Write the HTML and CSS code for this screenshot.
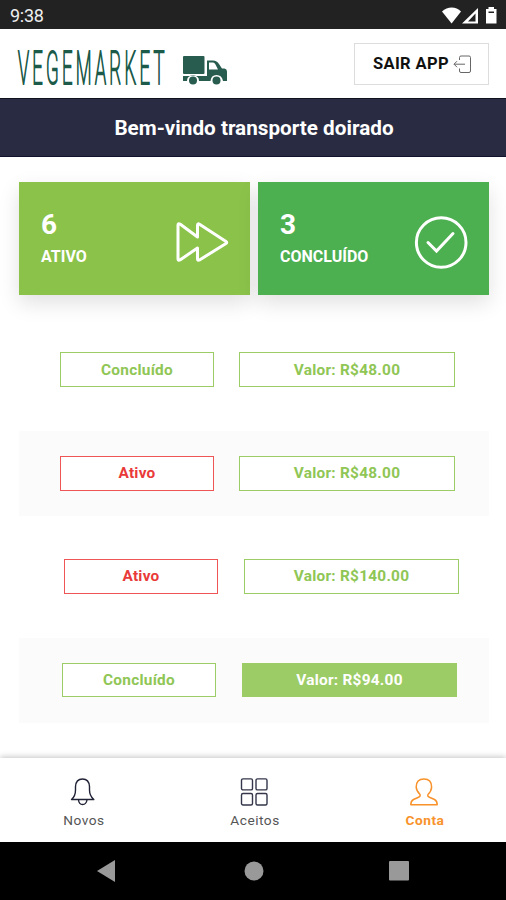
FILE: index.html
```html
<!DOCTYPE html>
<html lang="pt">
<head>
<meta charset="utf-8">
<title>Vegemarket</title>
<link rel="stylesheet" href="styles.css">
</head>
<body>
<div class="statusbar">
  <span class="time">9:38</span>
  <svg class="status-icons" width="56" height="18" viewBox="0 0 56 18">
    <path d="M0 4.500C5.500-1 14-1 19 4.500L9.600 16.500Z" fill="#fff"/>
    <path fill-rule="evenodd" d="M20 16.500L36 1V16.500ZM26 14.400H33.500V6.500Z" fill="#fff"/>
    <path fill-rule="evenodd" d="M46.500 0H52V2H54.500V16.500H44V2H46.500ZM46.500 4.500V6H52V4.500Z" fill="#fff"/>
  </svg>
</div>
<header class="header">
  <svg class="logo" width="212" height="44" viewBox="0 0 212 44">
    <text class="wordmark" transform="translate(0 38.500) scale(.4 1)" textLength="366">VEGEMARKET</text>
    <g fill="#285c4f">
      <rect x="165" y="11" width="21.500" height="18" rx="1"/>
      <path fill-rule="evenodd" d="M189 15.500H195Q199 15.500 201 19L204 23.500H206.500Q209 24 209 26.500V36H205Q204 30 198.500 30T192.500 36H181Q181 30.500 175 30.500T169 36H165V31H189ZM191 17.500V24.500H200L197.500 19.500Q196.500 17.500 195 17.500Z"/>
      <circle cx="175" cy="35.500" r="4"/>
      <circle cx="198.500" cy="35.500" r="4"/>
    </g>
  </svg>
  <button class="exit"><span>SAIR APP</span>
    <svg width="19" height="19" viewBox="0 0 19 19" fill="none" stroke="#666" stroke-width="1"><path d="M6.500 5V2.500Q6.500 1 8 1H16Q17.500 1 17.500 2.500V16Q17.500 17.500 16 17.500H8Q6.500 17.500 6.500 16V13.500M1 9.200H12M4 6.200L1 9.200L4 12.200"/></svg>
  </button>
</header>
<h1 class="banner">Bem-vindo transporte doirado</h1>
<main>
  <section class="cards">
    <div class="card lime">
      <div><div class="count">6</div><div class="label">ATIVO</div></div>
      <svg width="54" height="54" viewBox="0 0 54 54" fill="none" stroke="#fff" stroke-width="3" stroke-linejoin="round"><path d="M3 10Q3 8 5 9L22.500 22V10.500Q22.500 8 24.500 9.200L51 26.500Q52.500 27.500 51 28.500L24.500 45Q22.500 46 22.500 44V33L5 45Q3 46 3 44Z"/></svg>
    </div>
    <div class="card green">
      <div><div class="count">3</div><div class="label">CONCLUÍDO</div></div>
      <svg width="54" height="54" viewBox="0 0 54 54" fill="none" stroke="#fff" stroke-width="3" stroke-linecap="round"><circle cx="27.200" cy="27.500" r="24.800"/><path d="M14 27.500L22.500 36L39 18.500"/></svg>
    </div>
  </section>
  <section class="orders">
    <div class="row first"><span class="tag">Concluído</span><span class="tag value">Valor: R$48.00</span></div>
    <div class="row shaded"><span class="tag red">Ativo</span><span class="tag value">Valor: R$48.00</span></div>
    <div class="row third"><span class="tag red">Ativo</span><span class="tag value">Valor: R$140.00</span></div>
    <div class="row shaded fourth"><span class="tag">Concluído</span><span class="tag value filled">Valor: R$94.00</span></div>
  </section>
</main>
<nav class="tabs">
  <a class="tab"><svg width="28" height="28" viewBox="0 0 28 28" fill="none" stroke="#202236" stroke-width="1.400" stroke-linejoin="round"><path d="M1.500 21.500C4.500 19 5.500 17 5.500 12V8.500Q6 1 12.500 1T19.500 8.500V12C19.500 17 21 19 23.800 21.500ZM8.500 22Q9 26.500 12.600 26.500T17 22"/></svg><span>Novos</span></a>
  <a class="tab"><svg width="28" height="28" viewBox="0 0 28 28" fill="none" stroke="#34364a" stroke-width="1.400"><rect x="1.500" y=".9" width="11" height="11" rx="1.500"/><rect x="16" y=".9" width="11" height="11" rx="1.500"/><rect x="1.500" y="15.500" width="11" height="11.500" rx="1.500"/><rect x="16" y="15.500" width="11" height="11.500" rx="1.500"/></svg><span>Aceitos</span></a>
  <a class="tab active"><svg width="28" height="28" viewBox="0 0 28 28" fill="none" stroke="#f8922b" stroke-width="1.500" stroke-linejoin="round"><path d="M14 1C8.500 1 6.200 4.500 6.200 9C6.200 12.500 8 14.500 10 16.500Q10.800 18.500 8 19.500L3.500 21.500Q.8 23 .8 26.800H27.200Q27.200 23 24.500 21.500L20 19.500Q17 18.500 18 16.500C20 14.500 21.600 12.500 21.600 9C21.600 4.500 19.500 1 14 1Z"/></svg><span>Conta</span></a>
</nav>
<div class="sysnav">
  <svg width="18" height="22" viewBox="0 0 18 22"><path d="M0 11L18 0V22Z"/></svg>
  <svg class="home" width="20" height="20" viewBox="0 0 20 20"><circle cx="10" cy="10" r="9.500"/></svg>
  <svg width="20" height="20" viewBox="0 0 20 20"><rect width="20" height="19.500" rx="1"/></svg>
</div>
</body>
</html>
```
FILE: styles.css
```css
* { box-sizing: border-box; }
body {
  margin: 0;
  width: 506px;
  height: 900px;
  display: flex;
  flex-direction: column;
  overflow: hidden;
  background: #fff;
  font-family: Roboto, "Liberation Sans", sans-serif;
}
svg { display: block; flex: none; }
.statusbar {
  height: 29px;
  flex: none;
  background: #222;
  color: #eee;
  display: flex;
  justify-content: space-between;
  padding: 7px 8px 0 10px;
}
.time { font-size: 18px; line-height: 18px; letter-spacing: -.3px; font-weight: 400; }
.header {
  height: 69px;
  flex: none;
  display: flex;
  justify-content: space-between;
  padding: 14px 17px 0 18px;
}
.logo { margin-top: 2px; overflow: visible; }
.wordmark {
  font-family: Roboto, sans-serif;
  font-size: 46px;
  font-weight: 100;
  fill: #1c5a4a;
  stroke: #1c5a4a;
  stroke-width: 1.700px;
  vector-effect: non-scaling-stroke;
}
.exit {
  width: 135px;
  height: 42px;
  padding: 0 16px 0 18px;
  display: flex;
  align-items: center;
  justify-content: space-between;
  background: #fff;
  border: 1px solid #ddd;
  color: #111;
  font: 700 16.500px/20px Roboto, sans-serif;
  letter-spacing: .35px;
  white-space: nowrap;
}
.banner {
  margin: 0;
  height: 59px;
  flex: none;
  background: #282b42;
  border-top: 1px solid #11131f;
  border-bottom: 1px solid #11132c;
  color: #fff;
  font-size: 20.700px;
  line-height: 59px;
  font-weight: 700;
  text-align: center;
  padding-left: 2px;
}
main { height: 601px; flex: none; padding: 25px 17px 0 19px; }
.cards { display: flex; gap: 8px; }
.card {
  width: 231px;
  height: 113px;
  display: flex;
  justify-content: space-between;
  padding: 29px 21px 0 22px;
  color: #fff;
  box-shadow: 0 8px 20px rgba(0, 0, 0, .12);
}
.card svg { margin-top: 4px; }
.lime { background: #8bc34a; }
.green { background: #4caf50; }
.count { font-size: 28px; line-height: 28px; font-weight: 700; }
.label { font-size: 16px; line-height: 20px; font-weight: 700; margin-top: 8px; }
.orders { margin-top: 32px; display: grid; gap: 18.500px; }
.row {
  height: 85px;
  display: flex;
  align-items: center;
  gap: 25px;
  padding-left: 41px;
}
.third { padding-left: 45px; gap: 26px; }
.fourth { padding-left: 43px; gap: 26px; }
.shaded { background: #fbfbfb; }
.tag {
  width: 154px;
  height: 35px;
  border: 1px solid #9ccc65;
  background: #fff;
  color: #8fc655;
  font-size: 15.400px;
  line-height: 33px;
  font-weight: 700;
  letter-spacing: .25px;
  text-align: center;
}
.first .tag { line-height: 34px; }
.value { width: 216px; }
.third .value, .fourth .value { width: 215px; }
.fourth .tag { height: 34px; }
.red { border-color: #ee5555; color: #e93a3a; }
.filled { background: #9ccc65; color: #fff; }
.tabs {
  height: 84px;
  flex: none;
  display: flex;
  background: #fff;
  box-shadow: 0 -1px 6px rgba(0, 0, 0, .24);
  position: relative;
}
.tab {
  width: 170px;
  flex: none;
  display: flex;
  flex-direction: column;
  align-items: center;
  padding-top: 20px;
  font-size: 13.700px;
  line-height: 18px;
  letter-spacing: .5px;
  color: #555;
}
.tab:first-child span { margin-right: 2px; }
.tab svg { margin-right: 3px; }
.tab span { margin-top: 5px; }
.active { color: #f8922b; font-weight: 700; }
.sysnav {
  height: 58px;
  flex: none;
  background: #000;
  fill: #999;
  display: flex;
  justify-content: space-between;
  align-items: center;
  padding: 0 97px;
}
.home { margin-left: 3px; }
```
